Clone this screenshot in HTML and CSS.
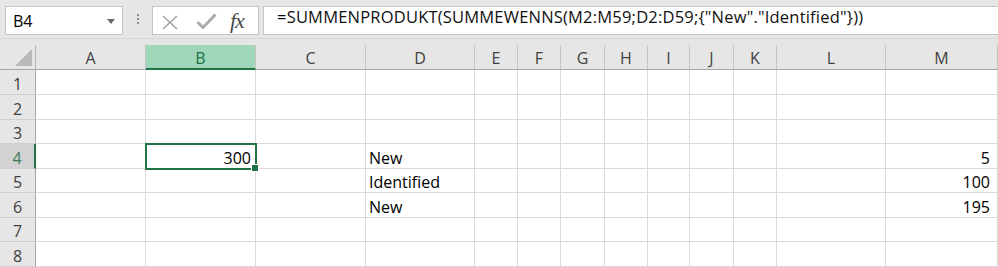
FILE: index.html
```html
<!DOCTYPE html>
<html>
<head>
<meta charset="utf-8">
<link rel="stylesheet" href="styles.css">
</head>
<body>
<div class="toolbar">
  <div class="namebox"><span class="nb-text">B4</span><svg class="dd" width="8" height="5" viewBox="0 0 8 5"><path d="M0 0H8L4 5Z" fill="#6a6a6a"/></svg></div>
  <div class="grip"><i></i><i></i><i></i></div>
  <div class="fbtns">
    <svg class="ico-x" width="16" height="15" viewBox="0 0 16 15"><path d="M1 1L15 14M15 1L1 14" stroke="#a3a3a3" stroke-width="1.6" fill="none"/></svg>
    <svg class="ico-ok" width="21" height="16" viewBox="0 0 21 16"><path d="M1.5 9L7 14.5L19.5 1.5" stroke="#ababab" stroke-width="3" fill="none"/></svg>
    <span class="fx">fx</span>
  </div>
  <div class="formula">=SUMMENPRODUKT(SUMMEWENNS(M2:M59;D2:D59;{"New"."Identified"}))</div>
</div>
<div class="sheet">
  <div class="corner"><svg width="18" height="18" viewBox="0 0 18 18"><path d="M17 0V17H0Z" fill="#b9b9b9"/></svg></div>
  <div class="h">A</div><div class="h hs">B</div><div class="h">C</div><div class="h">D</div><div class="h">E</div><div class="h">F</div><div class="h">G</div><div class="h">H</div><div class="h">I</div><div class="h">J</div><div class="h">K</div><div class="h">L</div><div class="h">M</div>

  <div class="r">1</div><div class="c"></div><div class="c"></div><div class="c"></div><div class="c"></div><div class="c"></div><div class="c"></div><div class="c"></div><div class="c"></div><div class="c"></div><div class="c"></div><div class="c"></div><div class="c"></div><div class="c"></div>
  <div class="r">2</div><div class="c"></div><div class="c"></div><div class="c"></div><div class="c"></div><div class="c"></div><div class="c"></div><div class="c"></div><div class="c"></div><div class="c"></div><div class="c"></div><div class="c"></div><div class="c"></div><div class="c"></div>
  <div class="r">3</div><div class="c"></div><div class="c"></div><div class="c"></div><div class="c"></div><div class="c"></div><div class="c"></div><div class="c"></div><div class="c"></div><div class="c"></div><div class="c"></div><div class="c"></div><div class="c"></div><div class="c"></div>
  <div class="r rs">4</div><div class="c"></div><div class="c num sel">300</div><div class="c"></div><div class="c">New</div><div class="c"></div><div class="c"></div><div class="c"></div><div class="c"></div><div class="c"></div><div class="c"></div><div class="c"></div><div class="c"></div><div class="c num m">5</div>
  <div class="r">5</div><div class="c"></div><div class="c"></div><div class="c"></div><div class="c">Identified</div><div class="c"></div><div class="c"></div><div class="c"></div><div class="c"></div><div class="c"></div><div class="c"></div><div class="c"></div><div class="c"></div><div class="c num m">100</div>
  <div class="r">6</div><div class="c"></div><div class="c"></div><div class="c"></div><div class="c">New</div><div class="c"></div><div class="c"></div><div class="c"></div><div class="c"></div><div class="c"></div><div class="c"></div><div class="c"></div><div class="c"></div><div class="c num m">195</div>
  <div class="r">7</div><div class="c"></div><div class="c"></div><div class="c"></div><div class="c"></div><div class="c"></div><div class="c"></div><div class="c"></div><div class="c"></div><div class="c"></div><div class="c"></div><div class="c"></div><div class="c"></div><div class="c"></div>
  <div class="r">8</div><div class="c"></div><div class="c"></div><div class="c"></div><div class="c"></div><div class="c"></div><div class="c"></div><div class="c"></div><div class="c"></div><div class="c"></div><div class="c"></div><div class="c"></div><div class="c"></div><div class="c"></div>
</div>
</body>
</html>
```

FILE: styles.css
```css
* { box-sizing: border-box; }
html, body { margin: 0; padding: 0; }
body {
  width: 998px;
  height: 267px;
  overflow: hidden;
  background: #e6e6e6;
  font-family: "Open Sans", "Noto Sans", sans-serif;
  font-size: 16px;
  color: #000;
}

/* ---------- toolbar ---------- */
.toolbar {
  display: flex;
  align-items: flex-start;
  height: 39px;
  padding-top: 6px;
  border-bottom: 1px solid #d6d6d6;
}
.namebox {
  margin-left: 5px;
  width: 118px;
  height: 29px;
  background: #fff;
  border: 1px solid #c6c6c6;
  display: flex;
  align-items: flex-start;
  justify-content: space-between;
  padding: 4px 7px 0 7px;
  line-height: 20px;
}
.dd { margin-top: 8px; }
.grip {
  width: 29px;
  height: 29px;
  display: flex;
  flex-direction: column;
  align-items: center;
  padding-top: 8px;
  gap: 2px;
}
.grip i {
  display: block;
  width: 2px;
  height: 2px;
  background: #8a8a8a;
}
.fbtns {
  width: 107px;
  height: 29px;
  background: #fff;
  border: 1px solid #c6c6c6;
  display: flex;
  align-items: flex-start;
  padding-left: 9px;
}
.ico-x { margin-top: 8px; }
.ico-ok { margin-top: 6px; margin-left: 18px; }
.fx {
  font-family: "Liberation Serif", "DejaVu Serif", serif;
  font-style: italic;
  font-size: 22px;
  line-height: 24px;
  color: #4a4a4a;
  margin-left: 13px;
  margin-top: 2px;
  letter-spacing: -1px;
}
.formula {
  flex: 1;
  height: 29px;
  margin-left: 4px;
  background: #fff;
  border: 1px solid #c6c6c6;
  border-right: none;
  padding-left: 13px;
  font-size: 16.5px;
  letter-spacing: 0.2px;
  line-height: 20px;
  white-space: nowrap;
  color: #111;
}

/* ---------- sheet ---------- */
.sheet {
  margin-top: 6px;
  display: grid;
  grid-template-columns: 36px 110px 110px 110px 109px 43px 43px 44px 43px 42px 44px 43px 109px 112px;
  grid-template-rows: 25px 25px 25px 24px 25px 24px 25px 24px 25px;
  background: #fff;
}
.corner {
  background: #e6e6e6;
  border-right: 1px solid #b4b4b4;
  border-bottom: 1px solid #a6a6a6;
  display: flex;
  justify-content: flex-end;
  align-items: flex-end;
  padding: 0 2px 2px 0;
}
.h {
  background: #e6e6e6;
  border-right: 1px solid #c4c4c4;
  border-bottom: 1px solid #a6a6a6;
  text-align: center;
  line-height: 22px;
  padding-top: 2px;
  color: #404040;
}
.hs {
  background: #a0d6b9;
  border-bottom: 2px solid #217346;
  color: #217346;
}
.r {
  background: #e6e6e6;
  border-right: 1px solid #a6a6a6;
  border-bottom: 1px solid #cfcfcf;
  display: flex;
  align-items: flex-end;
  justify-content: center;
  line-height: 20px;
  color: #404040;
}
.rs {
  background: #d2d2d2;
  border-right: 2px solid #217346;
  color: #3d7a55;
}
.c {
  border-right: 1px solid #dadada;
  border-bottom: 1px solid #dadada;
  display: flex;
  align-items: flex-end;
  line-height: 20px;
  padding: 0 3px;
  white-space: nowrap;
}
.num { justify-content: flex-end; }
.m { padding-right: 7px; }
.sel {
  position: relative;
  z-index: 2;
  outline: 2px solid #217346;
  outline-offset: -1px;
  padding-right: 4px;
}
.sel::after {
  content: "";
  position: absolute;
  right: -4px;
  bottom: -4px;
  width: 6px;
  height: 6px;
  background: #217346;
  border: 1px solid #fff;
}
```
